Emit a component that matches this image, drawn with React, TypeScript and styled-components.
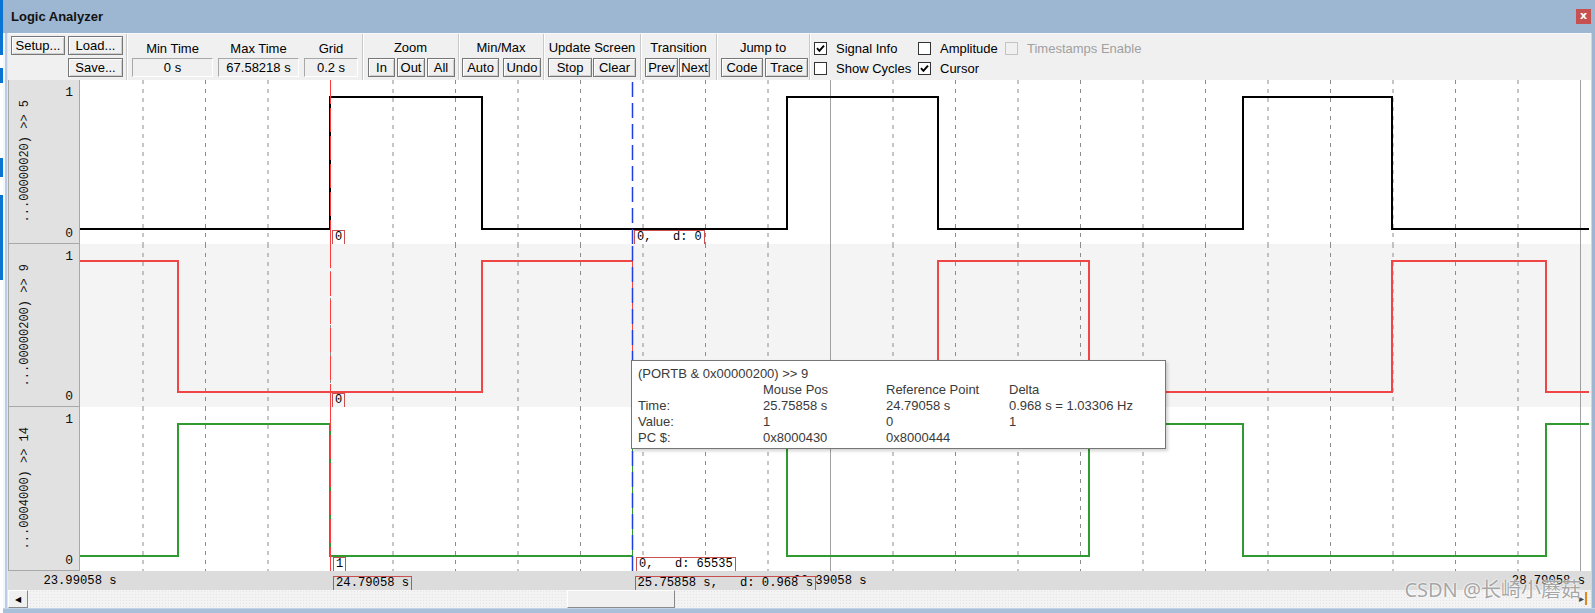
import React from 'react'
import styled, { createGlobalStyle } from 'styled-components'

const GlobalStyle = createGlobalStyle`
  html, body { margin: 0; padding: 0; background: #fff; }
  body { font-family: "Liberation Sans", Arial, sans-serif; font-size: 13px; color: #000; }
  #root { width: 1595px; height: 613px; overflow: hidden; }
`

const TRACE_X0 = 80
const PX_PER_S = 312.5
const T0 = 23.99058
const GRID = 62.5
const CANVAS_W = 1511
const RED_X = 250
const BLUE_X = 552.5

type Tag = { x: number, text: string }
type Signal = {
  name: string,
  color: string,
  stroke: number,
  start: number,
  edges: number[],
  height: number,
  bg: string,
  tags: Tag[],
}

const signals: Signal[] = [
  {
    name: '...00000020) >> 5', color: '#000', stroke: 1.6, start: 0, height: 164, bg: '#fff',
    edges: [330, 482, 787, 938, 1243, 1392],
    tags: [{ x: 252, text: '0' }, { x: 554, text: '0,   d: 0' }],
  },
  {
    name: '...00000200) >> 9', color: '#f04545', stroke: 1.2, start: 1, height: 163, bg: '#f4f4f4',
    edges: [178, 482, 632.5, 938, 1089, 1392, 1546],
    tags: [{ x: 252, text: '0' }],
  },
  {
    name: '...0004000) >> 14', color: '#2f9a2f', stroke: 1.2, start: 0, height: 164, bg: '#fff',
    edges: [178, 330, 632.5, 787, 1089, 1243, 1546],
    tags: [{ x: 253, text: '1' }, { x: 556, text: '0,   d: 65535' }],
  },
]

const Page = styled.div`
  position: relative;
  display: flex;
  width: 1595px;
  height: 613px;
`

const Backdrop = styled.div`
  width: 3px;
  flex: none;
  background: linear-gradient(to bottom,
    #0a74d4 0 55px, #fff 55px 68px, #0a74d4 68px 83px, #fff 83px 158px,
    #0a74d4 158px 177px, #fff 177px 195px, #0a74d4 195px 280px, #fff 280px);
`

const Window = styled.div`
  flex: 1;
  display: flex;
  flex-direction: column;
  background: #9db6d2;
`

const TitleBar = styled.div`
  height: 33px;
  flex: none;
  display: flex;
  align-items: center;
  justify-content: space-between;
  padding: 0 4px 0 8px;
  font-weight: bold;
  font-size: 13px;
  color: #111;
`

const CloseBox = styled.div`
  width: 15px;
  height: 15px;
  margin-top: -1px;
  background: #c75050;
  color: #fff;
  font-size: 11px;
  line-height: 14px;
  text-align: center;
  font-family: "DejaVu Sans", sans-serif;
`

const Body = styled.div`
  flex: 1;
  display: flex;
`

const LeftFrame = styled.div`
  width: 5px;
  flex: none;
  background: linear-gradient(to right, #f4f7fb 0 2px, #b8cce4 2px 4px, #dfe6ee 4px);
`

const RightFrame = styled.div`
  width: 4px;
  flex: none;
  background: linear-gradient(to right, #c9d8e8 0 1px, #9db6d2 1px);
`

const BottomFrame = styled.div`
  height: 5px;
  flex: none;
  background: linear-gradient(to bottom, #c4d4e6 0 1px, #a9c0da 1px);
`

const Main = styled.div`
  width: 1583px;
  flex: none;
  display: flex;
  flex-direction: column;
  background: #fff;
`

const Toolbar = styled.div`
  height: 47px;
  flex: none;
  display: flex;
  box-sizing: border-box;
  background: #f0f0f0;
  border-top: 1px solid #fafafa;
`

const Group = styled.div<{ $w: number }>`
  width: ${p => p.$w}px;
  flex: none;
  box-sizing: border-box;
  border-right: 1px solid #c9c9c9;
  box-shadow: 1px 0 0 #fff;
  display: flex;
  flex-direction: column;
  padding-top: 5px;
`

const GroupTitle = styled.div`
  height: 18px;
  line-height: 18px;
  text-align: center;
`

const Controls = styled.div<{ $pad: number, $gap: number }>`
  display: flex;
  gap: ${p => p.$gap}px;
  padding-left: ${p => p.$pad}px;
  margin-top: 1px;
`

const FileGrid = styled.div`
  display: grid;
  grid-template-columns: 54px 55px;
  grid-template-rows: 19px 20px;
  column-gap: 3px;
  row-gap: 3px;
  padding-left: 3px;
  margin-top: -3px;
`

const Btn = styled.div<{ $w: number }>`
  width: ${p => p.$w}px;
  height: 19px;
  box-sizing: border-box;
  border: 1px solid #777;
  box-shadow: inset 1px 1px 0 #fff, inset -1px -1px 0 #cfcfcf;
  background: #f0f0f0;
  display: flex;
  align-items: center;
  justify-content: center;
  line-height: 1;
`

const FieldCol = styled.div<{ $w: number }>`
  width: ${p => p.$w}px;
  display: flex;
  flex-direction: column;
`

const Field = styled.div`
  height: 19px;
  box-sizing: border-box;
  border: 1px solid;
  border-color: #a8a8a8 #fff #fff #a8a8a8;
  display: flex;
  align-items: center;
  justify-content: center;
`

const CheckGrid = styled.div`
  display: grid;
  grid-template-columns: 104px 87px auto;
  grid-template-rows: 20px 20px;
  padding: 4px 0 0 4px;
`

const CheckItem = styled.div<{ $disabled?: boolean }>`
  display: flex;
  align-items: center;
  gap: 9px;
  color: ${p => (p.$disabled ? '#a0a0a0' : '#000')};
`

const Box = styled.div<{ $disabled?: boolean }>`
  width: 13px;
  height: 13px;
  box-sizing: border-box;
  border: 1px solid ${p => (p.$disabled ? '#c4c4c4' : '#333')};
  background: ${p => (p.$disabled ? '#f0f0f0' : '#fff')};
  display: flex;
  align-items: center;
  justify-content: center;
`

const Signals = styled.div`
  position: relative;
  display: flex;
  flex-direction: column;
`

const Row = styled.div<{ $h: number }>`
  height: ${p => p.$h}px;
  display: flex;
`

const LabelCell = styled.div`
  width: 72px;
  flex: none;
  box-sizing: border-box;
  background: #e1e1e1;
  border: 1px solid #a8a8a8;
  border-top: none;
  display: flex;
  justify-content: space-between;
  font-family: "Liberation Mono", monospace;
  font-size: 12px;
  color: #111;
`

const RotName = styled.div`
  writing-mode: vertical-rl;
  transform: rotate(180deg);
  align-self: center;
  margin-left: 9px;
  white-space: nowrap;
`

const Levels = styled.div`
  display: flex;
  flex-direction: column;
  justify-content: space-between;
  padding: 5px 6px 2px 0;
  font-size: 13px;
`

const Trace = styled.div<{ $bg: string }>`
  position: relative;
  flex: 1;
  background: ${p => p.$bg};
  overflow: hidden;
`

const ValueTag = styled.div<{ $bg: string }>`
  position: absolute;
  height: 15px;
  box-sizing: border-box;
  padding: 0 2px;
  border: 1px solid #c85050;
  background: ${p => p.$bg};
  font-family: "Liberation Mono", monospace;
  font-size: 12px;
  line-height: 13px;
  white-space: pre;
`

const Tooltip = styled.div`
  position: absolute;
  left: 623px;
  top: 280px;
  width: 535px;
  height: 89px;
  box-sizing: border-box;
  padding: 5px 6px;
  background: #fff;
  border: 1px solid #767676;
  box-shadow: 2px 2px 3px rgba(0, 0, 0, 0.18);
  color: #3a3a3a;
  line-height: 16px;
  z-index: 5;
`

const TipGrid = styled.div`
  display: grid;
  grid-template-columns: 125px 123px 123px auto;
`

const TimeBar = styled.div`
  position: relative;
  height: 19px;
  flex: none;
  background: #dcdcdc;
  overflow: hidden;
  font-family: "Liberation Mono", monospace;
  font-size: 12.2px;
  white-space: pre;
`

const TimeText = styled.div<{ $anchor: 'center' | 'right' }>`
  position: absolute;
  top: 3px;
  line-height: 14px;
  transform: ${p => (p.$anchor === 'center' ? 'translateX(-50%)' : 'none')};
`

const TimeBox = styled.div`
  position: absolute;
  top: 5px;
  height: 16px;
  box-sizing: border-box;
  padding: 0 2px;
  border: 1px solid #c85050;
  background: #dcdcdc;
  line-height: 13px;
`

const ScrollBar = styled.div`
  position: relative;
  height: 18px;
  flex: none;
  display: flex;
  background: #f3f3f3;
  background-image: radial-gradient(#e4e4e4 0.6px, transparent 0.7px);
  background-size: 3px 3px;
`

const ScrollBtn = styled.div`
  width: 20px;
  height: 18px;
  box-sizing: border-box;
  background: #f0f0f0;
  border: 1px solid;
  border-color: #fff #8a8a8a #8a8a8a #fff;
  display: flex;
  align-items: center;
  justify-content: center;
  font-size: 8px;
  font-family: "DejaVu Sans", sans-serif;
`

const Thumb = styled.div`
  position: absolute;
  left: 559px;
  top: 0;
  width: 108px;
  height: 18px;
  box-sizing: border-box;
  background: #f0f0f0;
  border: 1px solid;
  border-color: #fff #8a8a8a #8a8a8a #fff;
`

const EndMark = styled.div`
  position: absolute;
  right: 4px;
  top: 2px;
  display: flex;
  align-items: center;
  gap: 1px;
  font-size: 10px;
  color: #444;
  font-family: "DejaVu Sans", sans-serif;
`

const OrangeBar = styled.div`
  width: 2px;
  height: 13px;
  background: #e08a1e;
`

const Watermark = styled.div`
  position: absolute;
  right: 14px;
  top: 578px;
  font-family: "Noto Sans", "Noto Sans CJK SC", sans-serif;
  font-size: 20px;
  line-height: 24px;
  color: rgba(150, 150, 150, 0.85);
  text-shadow: 0 0 2px #fff, 0 0 2px #fff;
  z-index: 10;
`

const Tick: React.FC = () => (
  <svg width="9" height="9" viewBox="0 0 9 9">
    <path d="M1 4.2 L3.4 6.8 L8 1.6" fill="none" stroke="#000" strokeWidth="1.9" />
  </svg>
)

const wavePath = (s: Signal, hi: number, lo: number) => {
  let level = s.start
  let d = `M0 ${level ? hi : lo}`
  s.edges.forEach((e) => {
    const x = e - TRACE_X0
    d += ` H${x}`
    level = 1 - level
    d += ` V${level ? hi : lo}`
  })
  d += ` H${CANVAS_W - 2}`
  return d
}

const gridLines = Array.from({ length: 24 }, (_, i) => (i + 1) * GRID)

const WaveRow: React.FC<{ s: Signal }> = ({ s }) => {
  const hi = 17
  const lo = s.height - 15
  return (
    <Row $h={s.height}>
      <LabelCell>
        <RotName>{s.name}</RotName>
        <Levels>
          <span>1</span>
          <span>0</span>
        </Levels>
      </LabelCell>
      <Trace $bg={s.bg}>
        <svg width={CANVAS_W} height={s.height} style={{ display: 'block' }}>
          {gridLines.map((x, i) => (
            <line
              key={x}
              x1={x + 0.5} x2={x + 0.5} y1={0} y2={s.height}
              stroke={i === 11 || i === 23 ? '#a0a0a0' : '#8c8c8c'}
              strokeDasharray={i === 11 || i === 23 ? undefined : '4 5'}
              strokeWidth={1}
            />
          ))}
          <path d={wavePath(s, hi, lo)} fill="none" stroke={s.color} strokeWidth={s.stroke} shapeRendering="crispEdges" />
          <line x1={RED_X + 0.5} x2={RED_X + 0.5} y1={0} y2={s.height} stroke="#ff3b3b" strokeWidth={1} strokeDasharray="24 4" />
          <line x1={BLUE_X} x2={BLUE_X} y1={2} y2={s.height} stroke="#1f3fe0" strokeWidth={1.5} strokeDasharray="15 6" />
        </svg>
        {s.tags.map(t => (
          <ValueTag key={t.x} $bg={s.bg} style={{ left: t.x, top: lo + 1 }}>{t.text}</ValueTag>
        ))}
      </Trace>
    </Row>
  )
}

const timeX = (t: number) => (t - T0) * PX_PER_S + (TRACE_X0 - 8)

const App: React.FC = () => {
  return (
    <Page>
      <GlobalStyle />
      <Backdrop />
      <Window>
        <TitleBar>
          <span>Logic Analyzer</span>
          <CloseBox>x</CloseBox>
        </TitleBar>
        <Body>
          <LeftFrame />
          <Main>
            <Toolbar>
              <Group $w={119}>
                <FileGrid>
                  <Btn $w={54}>Setup...</Btn>
                  <Btn $w={55}>Load...</Btn>
                  <span />
                  <Btn $w={55}>Save...</Btn>
                </FileGrid>
              </Group>
              <Group $w={236}>
                <Controls $pad={5} $gap={5}>
                  <FieldCol $w={81}><GroupTitle>Min Time</GroupTitle><Field>0 s</Field></FieldCol>
                  <FieldCol $w={81}><GroupTitle>Max Time</GroupTitle><Field>67.58218 s</Field></FieldCol>
                  <FieldCol $w={54}><GroupTitle>Grid</GroupTitle><Field>0.2 s</Field></FieldCol>
                </Controls>
              </Group>
              <Group $w={96}>
                <GroupTitle>Zoom</GroupTitle>
                <Controls $pad={5} $gap={2}>
                  <Btn $w={27}>In</Btn>
                  <Btn $w={28}>Out</Btn>
                  <Btn $w={28}>All</Btn>
                </Controls>
              </Group>
              <Group $w={85}>
                <GroupTitle>Min/Max</GroupTitle>
                <Controls $pad={3} $gap={4}>
                  <Btn $w={37}>Auto</Btn>
                  <Btn $w={38}>Undo</Btn>
                </Controls>
              </Group>
              <Group $w={97}>
                <GroupTitle>Update Screen</GroupTitle>
                <Controls $pad={4} $gap={1}>
                  <Btn $w={44}>Stop</Btn>
                  <Btn $w={43}>Clear</Btn>
                </Controls>
              </Group>
              <Group $w={76}>
                <GroupTitle>Transition</GroupTitle>
                <Controls $pad={4} $gap={1}>
                  <Btn $w={33}>Prev</Btn>
                  <Btn $w={31}>Next</Btn>
                </Controls>
              </Group>
              <Group $w={93}>
                <GroupTitle>Jump to</GroupTitle>
                <Controls $pad={4} $gap={2}>
                  <Btn $w={42}>Code</Btn>
                  <Btn $w={43}>Trace</Btn>
                </Controls>
              </Group>
              <CheckGrid>
                <CheckItem><Box><Tick /></Box>Signal Info</CheckItem>
                <CheckItem><Box />Amplitude</CheckItem>
                <CheckItem $disabled><Box $disabled />Timestamps Enable</CheckItem>
                <CheckItem><Box />Show Cycles</CheckItem>
                <CheckItem><Box><Tick /></Box>Cursor</CheckItem>
              </CheckGrid>
            </Toolbar>
            <Signals>
              {signals.map(s => <WaveRow key={s.name} s={s} />)}
              <Tooltip>
                <div>(PORTB &amp; 0x00000200) &gt;&gt; 9</div>
                <TipGrid>
                  <span /><span>Mouse Pos</span><span>Reference Point</span><span>Delta</span>
                  <span>Time:</span><span>25.75858 s</span><span>24.79058 s</span><span>0.968 s = 1.03306 Hz</span>
                  <span>Value:</span><span>1</span><span>0</span><span>1</span>
                  <span>PC $:</span><span>0x8000430</span><span>0x8000444</span><span />
                </TipGrid>
              </Tooltip>
            </Signals>
            <TimeBar>
              <TimeText $anchor="center" style={{ left: timeX(23.99058) }}>23.99058 s</TimeText>
              <TimeText $anchor="center" style={{ left: timeX(26.39058) }}>26.39058 s</TimeText>
              <TimeText $anchor="right" style={{ right: 6 }}>28.79058 s</TimeText>
              <TimeBox style={{ left: timeX(24.79058) + 3 }}>24.79058 s</TimeBox>
              <TimeBox style={{ left: timeX(25.75858) + 2 }}>25.75858 s,   d: 0.968 s</TimeBox>
            </TimeBar>
            <ScrollBar>
              <ScrollBtn>◀</ScrollBtn>
              <Thumb />
              <EndMark>▸<OrangeBar /></EndMark>
            </ScrollBar>
          </Main>
          <RightFrame />
        </Body>
        <BottomFrame />
      </Window>
      <Watermark>CSDN @长崎小蘑菇</Watermark>
    </Page>
  )
}

export default App
